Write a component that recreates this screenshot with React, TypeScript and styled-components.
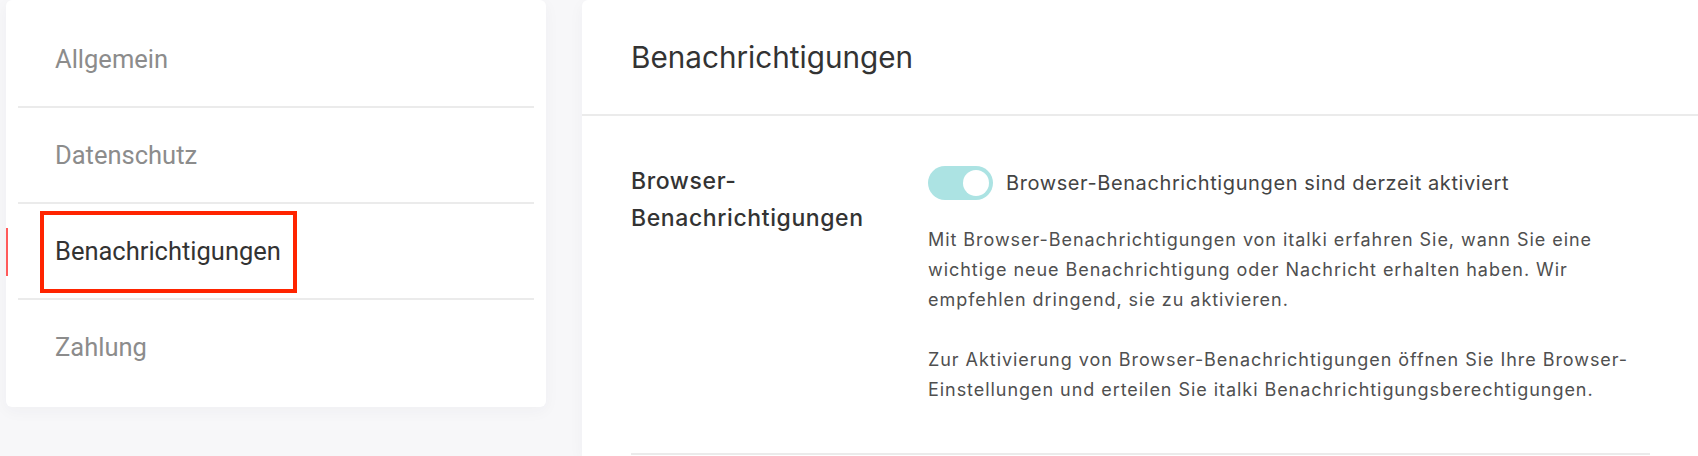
import styled, { createGlobalStyle } from 'styled-components'

const GlobalStyle = createGlobalStyle`
  body {
    margin: 0;
    background: #f7f7f9;
    font-family: Inter, 'Noto Sans', sans-serif;
  }
`

const navItems = ['Allgemein', 'Datenschutz', 'Benachrichtigungen', 'Zahlung']
const activeItem = 'Benachrichtigungen'

const App = () => {
  return (
    <>
      <GlobalStyle />
      <Page>
        <NavCard>
          {navItems.map((item) => (
            <NavItem key={item} $active={item === activeItem}>
              {item}
              {item === activeItem && <Highlight />}
            </NavItem>
          ))}
        </NavCard>

        <Panel>
          <PanelHeader>Benachrichtigungen</PanelHeader>
          <PanelBody>
            <SettingRow>
              <RowLabel>Browser-Benachrichtigungen</RowLabel>
              <div>
                <ToggleLine>
                  <Switch $on>
                    <Knob />
                  </Switch>
                  Browser-Benachrichtigungen sind derzeit aktiviert
                </ToggleLine>
                <Text>
                  Mit Browser-Benachrichtigungen von italki erfahren Sie, wann Sie eine wichtige neue Benachrichtigung oder
                  Nachricht erhalten haben. Wir empfehlen dringend, sie zu aktivieren.
                </Text>
                <Text>
                  Zur Aktivierung von Browser-Benachrichtigungen öffnen Sie Ihre Browser-Einstellungen und erteilen Sie italki
                  Benachrichtigungsberechtigungen.
                </Text>
              </div>
            </SettingRow>
          </PanelBody>
        </Panel>
      </Page>
    </>
  )
}

export default App

const Page = styled.div`
  display: flex;
  align-items: flex-start;
  gap: 36px;
  padding-left: 6px;
  min-height: 456px;
`
const NavCard = styled.nav`
  width: 540px;
  box-sizing: border-box;
  padding: 12px 12px 13px;
  background: #fff;
  border-radius: 6px;
  box-shadow: 0 4px 16px rgba(40, 40, 80, 0.04);
`
const NavItem = styled.div<{ $active?: boolean }>`
  position: relative;
  height: 94px;
  display: flex;
  align-items: center;
  padding-left: 37px;
  font-family: Roboto, 'Noto Sans', sans-serif;
  font-size: 25.5px;
  color: ${({ $active }) => ($active ? '#333' : '#8c8c8c')};

  & + & {
    border-top: 2px solid #ebebeb;
  }

  ${({ $active }) =>
    $active &&
    `
    &::before {
      content: '';
      position: absolute;
      left: -12px;
      top: 24px;
      width: 2px;
      height: 48px;
      background: #ff5a5a;
    }
  `}
`
const Highlight = styled.span`
  position: absolute;
  left: 22px;
  top: 7px;
  width: 257px;
  height: 82px;
  box-sizing: border-box;
  border: 4px solid #ff2400;
  pointer-events: none;
`
const Panel = styled.section`
  flex: 1;
  min-height: 456px;
  background: #fff;
  border-radius: 6px 0 0 0;
  box-shadow: 0 4px 16px rgba(40, 40, 80, 0.04);
`
const PanelHeader = styled.header`
  height: 114px;
  display: flex;
  align-items: center;
  padding: 0 49px;
  border-bottom: 2px solid #ebebeb;
  font-size: 29.7px;
  color: #333;
`
const PanelBody = styled.div`
  padding: 0 48px 0 49px;
`
const SettingRow = styled.div`
  display: grid;
  grid-template-columns: 297px 1fr;
  padding: 47px 0 48px;
  border-bottom: 2px solid #ebebeb;
`
const RowLabel = styled.div`
  padding-right: 30px;
  font-size: 23px;
  line-height: 37px;
  letter-spacing: 0.6px;
  font-weight: 500;
  color: #333;
`
const ToggleLine = styled.div`
  display: flex;
  align-items: center;
  gap: 13px;
  height: 40px;
  margin-bottom: 22px;
  font-size: 20px;
  letter-spacing: 0.6px;
  color: #444;
`
const Switch = styled.span<{ $on?: boolean }>`
  display: flex;
  align-items: center;
  justify-content: ${({ $on }) => ($on ? 'flex-end' : 'flex-start')};
  flex-shrink: 0;
  width: 65px;
  height: 34px;
  box-sizing: border-box;
  padding: 0 4px;
  border-radius: 17px;
  background: ${({ $on }) => ($on ? '#ace3e3' : '#ddd')};
`
const Knob = styled.span`
  width: 26px;
  height: 26px;
  border-radius: 50%;
  background: #fff;
`
const Text = styled.p`
  margin: 0;
  font-size: 18px;
  line-height: 30px;
  letter-spacing: 0.95px;
  color: #4f4f4f;

  & + & {
    margin-top: 30px;
  }
`
